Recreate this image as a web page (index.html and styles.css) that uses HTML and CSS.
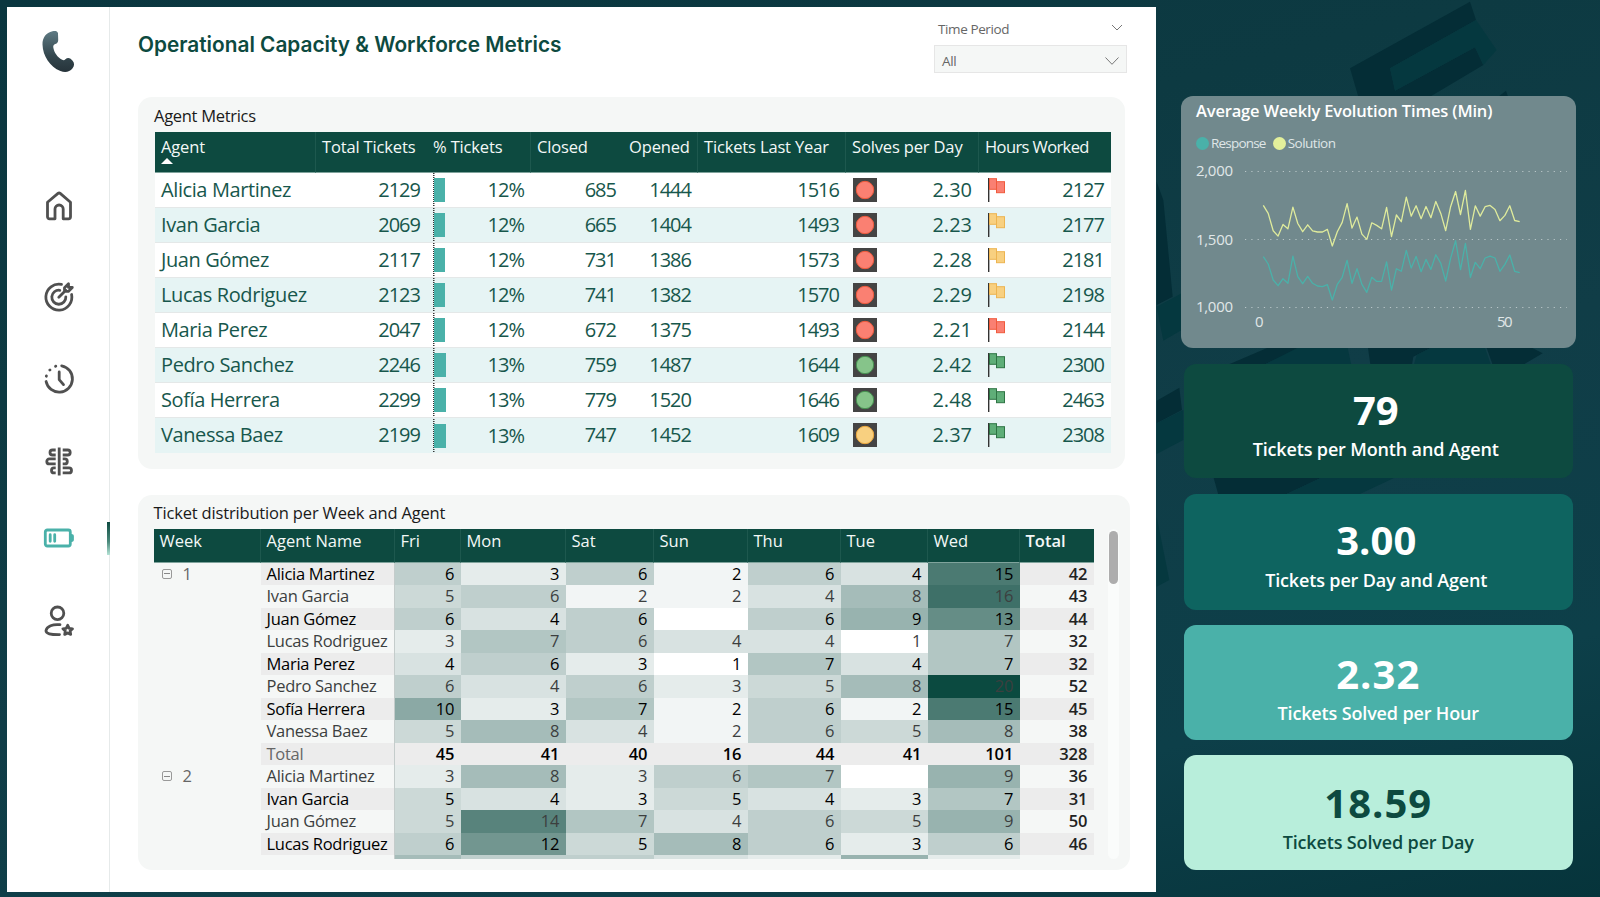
FILE: index.html
```html
<!DOCTYPE html>
<html lang="en">
<head>
  <meta charset="UTF-8">
  <meta name="viewport" content="width=device-width, initial-scale=1.0">
  <title>Operational Capacity &amp; Workforce Metrics</title>
  <link rel="stylesheet" href="styles.css">
</head>
<body>
  <!-- Decorative shapes behind the cards -->
  <svg class="backdrop" viewBox="0 0 1350 2691" preserveAspectRatio="none">
    <g fill="#042d36">
      <polygon points="600,205 960,5 978,60 720,205 735,272 975,142 1000,195 840,290 625,290"/>
      <polygon points="20,545 40,600 68,890 20,915"/>
      <polygon points="1045,290 1068,272 1074,290"/>
      <polygon points="220,1100 360,1040 480,1030 330,1100"/>
      <polygon points="652,1030 870,1030 790,1070 785,1100 662,1100"/>
      <polygon points="1005,1030 1120,1030 1178,1060 1110,1100 1030,1100"/>
      <polygon points="20,1202 88,1163 96,1230 20,1270"/>
      <polygon points="190,1430 520,1430 405,1484 205,1484"/>
    </g>
    <g fill="#05383f">
      <polygon points="720,205 978,60 1040,150 1000,195 975,142 735,272"/>
      <polygon points="20,920 95,880 95,990 40,1022"/>
      <polygon points="330,1100 470,1030 590,1030 605,1100"/>
      <polygon points="790,1100 800,1065 870,1030 1000,1030 1025,1100"/>
      <polygon points="20,1270 100,1230 100,1320 20,1362"/>
      <polygon points="20,1550 58,1740 20,1760"/>
      <polygon points="520,1430 740,1430 625,1484 405,1484"/>
    </g>
  </svg>

  <main class="panel">
    <nav class="sidebar">
      <svg class="logo" viewBox="0 0 34 44">
        <defs>
          <linearGradient id="phone" x1="0" y1="0" x2="0" y2="1">
            <stop offset="0" stop-color="#5f7b84"/>
            <stop offset="0.6" stop-color="#34474e"/>
            <stop offset="1" stop-color="#26333a"/>
          </linearGradient>
        </defs>
        <path fill="url(#phone)" d="M11.5 1.2C14 .6 16.500.8 17 3.200l.2 6.800c0 2.300-.9 3.300-2.900 4-1.500.6-2.300 1.500-2 3.400.8 5 4.200 9.900 8.800 12.300 1.500.8 2.300.6 3.300-.4 1.600-1.600 3.400-1.900 5.200-.5l2 2c2 2.200 2 5-.2 7.700-2.700 3.500-7.200 4.500-12 2.500C9 36.800 1.800 26 1.500 14.500 1.400 7.500 5 2.700 11.500 1.200z"/>
      </svg>

      <svg class="icon home" viewBox="0 0 32 32">
        <path d="M4.500 12.300 15 3.400a1.700 1.700 0 0 1 2.200 0l10.300 8.900v14.500a2 2 0 0 1-2 2h-5.300v-9.700a4.100 4.100 0 0 0-8.200 0v9.700H6.500a2 2 0 0 1-2-2z"/>
      </svg>
      <svg class="icon target" viewBox="0 0 32 32">
        <path d="M18.500 3.400A13 13 0 1 0 28.600 13.500M16.800 9.300a7 7 0 1 0 6 6.500M15.800 16.200l7-7M21.500 10.400V6.800l4-4v3.600h3.800l-4 4z"/>
      </svg>
      <svg class="icon clock" viewBox="0 0 32 32">
        <path d="M18.700 2.800A13.300 13.300 0 1 1 3.100 18.500M16.200 9v7.600l4.300 5"/>
        <path d="M3.300 13.200l.1-.3M6.800 7.100l.2-.2M12.500 3.300l.3-.1"/>
      </svg>
      <svg class="icon align" viewBox="0 0 32 32">
        <path d="M16.200 2.500v28M12.700 5H9.500a2.500 2.500 0 0 0 0 5H12.700M12.700 13.900H6.300a2.500 2.500 0 0 0 0 5H12.700M12.700 22.900h-1.700a2.500 2.500 0 0 0 0 5h1.700M19.700 5h5a2.500 2.500 0 0 1 0 5h-5M19.700 13.900h2.100a2.500 2.500 0 0 1 0 5h-2.100M19.700 22.900h6.300a2.500 2.500 0 0 1 0 5h-6.300"/>
      </svg>
      <div class="nav-active">
        <svg class="icon battery" viewBox="0 0 32 32">
          <rect x="2.300" y="8" width="25" height="16" rx="2"/>
          <path d="M7.200 12.700v6.600M11.700 12.700v6.600"/>
          <path class="tip" d="M27.500 12c3.400.2 3.400.8 3.400 4s0 3.800-3.400 4z"/>
        </svg>
        <span class="marker"></span>
      </div>
      <svg class="icon user" viewBox="0 0 32 32">
        <circle cx="14.500" cy="8.300" r="6.300"/>
        <path d="M17 19.700c-7-.8-13.500 1.500-14 6-.2 3 4.500 4 13.500 3.900"/>
        <path d="M24.700 20.300l1.500 3 3.300.5-2.400 2.300.6 3.300-3-1.500-3 1.500.6-3.300-2.400-2.300 3.300-.5z"/>
      </svg>
    </nav>

    <section class="content">
      <header class="top">
        <h1>Operational Capacity &amp; Workforce Metrics</h1>
        <div class="filter">
          <div class="filter-label">
            <span>Time Period</span>
            <svg viewBox="0 0 12 7" width="12" height="7"><path d="M1 1l5 5 5-5"/></svg>
          </div>
          <div class="filter-box">
            <span>All</span>
            <svg viewBox="0 0 14 8" width="14" height="8"><path d="M.5.5L7 7.300 13.500.5"/></svg>
          </div>
        </div>
      </header>

      <!-- Agent metrics -->
      <div class="card metrics-card">
        <h2>Agent Metrics</h2>
        <table class="metrics">
          <colgroup>
            <col class="m1"><col class="m2"><col class="m3"><col class="m4"><col class="m5"><col class="m6"><col class="m7"><col class="m8">
          </colgroup>
          <thead>
            <tr>
              <th class="line">Agent<i class="sort"></i></th>
              <th>Total Tickets</th>
              <th class="line">% Tickets</th>
              <th>Closed</th>
              <th class="line">Opened</th>
              <th class="line">Tickets Last Year</th>
              <th class="line">Solves per Day</th>
              <th class="hours">Hours Worked</th>
            </tr>
          </thead>
          <tbody id="metrics"></tbody>
        </table>
      </div>

      <!-- Heat map by week -->
      <div class="card weeks-card">
        <h2>Ticket distribution per Week and Agent</h2>
        <div class="weeks-wrap">
          <div class="weeks-view">
            <table class="weeks">
              <colgroup>
                <col class="w1"><col class="w2"><col class="w3"><col class="w4"><col class="w5"><col class="w6"><col class="w7"><col class="w8"><col class="w9"><col class="w10">
              </colgroup>
              <thead>
                <tr>
                  <th>Week</th><th>Agent Name</th><th>Fri</th><th>Mon</th><th>Sat</th><th>Sun</th><th>Thu</th><th>Tue</th><th>Wed</th><th class="bold">Total</th>
                </tr>
              </thead>
              <tbody id="weeks"></tbody>
            </table>
          </div>
          <div class="scroll"><div class="thumb"></div></div>
        </div>
      </div>
    </section>
  </main>

  <aside class="side">
    <div class="chart-card">
      <h2>Average Weekly Evolution Times (Min)</h2>
      <div class="legend">
        <span class="dot response"></span><span class="legend-text">Response</span>
        <span class="dot solution"></span><span class="legend-text">Solution</span>
      </div>
      <svg class="chart" viewBox="0 0 395 200">
        <g class="grid">
          <path d="M64 19.500H386"/><path d="M64 87.500H386"/><path d="M64 155.500H386"/>
        </g>
        <g class="axis">
          <text x="15" y="24" textLength="37">2,000</text>
          <text x="15" y="92.500" textLength="37">1,500</text>
          <text x="15" y="160" textLength="37">1,000</text>
          <text x="74" y="175">0</text>
          <text x="316" y="175" textLength="15.500">50</text>
        </g>
        <polyline id="response" class="series response-line"/>
        <polyline id="solution" class="series solution-line"/>
      </svg>
    </div>

    <div class="kpi month"><strong>79</strong><span>Tickets per Month and Agent</span></div>
    <div class="kpi day"><strong>3.00</strong><span>Tickets per Day and Agent</span></div>
    <div class="kpi hour"><strong>2.32</strong><span>Tickets Solved per Hour</span></div>
    <div class="kpi solved"><strong>18.59</strong><span>Tickets Solved per Day</span></div>
  </aside>

  <script>
    // name, total, %, closed, opened, last year, solves, light, hours, flag
    const agents = [
      ['Alicia Martinez', 2129, 12, 685, 1444, 1516, '2.30', 'red', 2127, 'red'],
      ['Ivan Garcia', 2069, 12, 665, 1404, 1493, '2.23', 'red', 2177, 'yellow'],
      ['Juan Gómez', 2117, 12, 731, 1386, 1573, '2.28', 'red', 2181, 'yellow'],
      ['Lucas Rodriguez', 2123, 12, 741, 1382, 1570, '2.29', 'red', 2198, 'yellow'],
      ['Maria Perez', 2047, 12, 672, 1375, 1493, '2.21', 'red', 2144, 'red'],
      ['Pedro Sanchez', 2246, 13, 759, 1487, 1644, '2.42', 'green', 2300, 'green'],
      ['Sofía Herrera', 2299, 13, 779, 1520, 1646, '2.48', 'green', 2463, 'green'],
      ['Vanessa Baez', 2199, 13, 747, 1452, 1609, '2.37', 'yellow', 2308, 'green']
    ];

    const flag = color => `<svg class="flag ${color}" viewBox="0 0 18 24"><path class="pole" d="M.7 0v24"/><rect x="1.500" y=".7" width="7" height="10.600"/><rect x="8.500" y="3.700" width="8" height="11"/></svg>`;
    const light = color => `<svg class="light ${color}" viewBox="0 0 24 24"><circle cx="12" cy="12" r="8.700"/></svg>`;

    document.getElementById('metrics').innerHTML = agents.map(a => `
      <tr>
        <td class="name">${a[0]}</td>
        <td>${a[1]}</td>
        <td><div class="cell bar-cell"><i class="bar" style="width:${a[2] - 1.5}px"></i><span>${a[2]}%</span></div></td>
        <td>${a[3]}</td>
        <td>${a[4]}</td>
        <td>${a[5]}</td>
        <td><div class="cell">${light(a[7])}<span class="decimal">${a[6]}</span></div></td>
        <td><div class="cell flag-cell">${flag(a[9])}<span>${a[8]}</span></div></td>
      </tr>`).join('');

    // week, name, Fri, Mon, Sat, Sun, Thu, Tue, Wed, total
    const weeks = [
      ['1', 'Alicia Martinez', 6, 3, 6, 2, 6, 4, 15, 42],
      ['', 'Ivan Garcia', 5, 6, 2, 2, 4, 8, 16, 43],
      ['', 'Juan Gómez', 6, 4, 6, '', 6, 9, 13, 44],
      ['', 'Lucas Rodriguez', 3, 7, 6, 4, 4, 1, 7, 32],
      ['', 'Maria Perez', 4, 6, 3, 1, 7, 4, 7, 32],
      ['', 'Pedro Sanchez', 6, 4, 6, 3, 5, 8, 20, 52],
      ['', 'Sofía Herrera', 10, 3, 7, 2, 6, 2, 15, 45],
      ['', 'Vanessa Baez', 5, 8, 4, 2, 6, 5, 8, 38],
      ['', 'Total', 45, 41, 40, 16, 44, 41, 101, 328],
      ['2', 'Alicia Martinez', 3, 8, 3, 6, 7, '', 9, 36],
      ['', 'Ivan Garcia', 5, 4, 3, 5, 4, 3, 7, 31],
      ['', 'Juan Gómez', 5, 14, 7, 4, 6, 5, 9, 50],
      ['', 'Lucas Rodriguez', 6, 12, 5, 8, 6, 3, 6, 46]
    ];

    // top edge of the row under the fold
    const nextRow = [8, 6, 6, 4, 3, 9, 3];

    // white at 1, dark green at 20
    function heat(n) {
      const t = n === '' ? 0 : (n - 1) / 19;
      const c = [11, 74, 64].map(v => Math.round(255 + (v - 255) * t));
      return `rgb(${c.join(',')})`;
    }

    document.getElementById('weeks').innerHTML = weeks.map((r, i) => {
      const total = r[1] === 'Total';
      const cells = r.slice(2, 9).map(n => total ? `<td>${n}</td>` : `<td style="background:${heat(n)}">${n}</td>`).join('');
      const week = r[0] ? `<i class="toggle"></i><span>${r[0]}</span>` : '';
      return `<tr class="${i % 2 ? 'odd' : 'even'}${total ? ' total' : ''}"><td class="week"><div>${week}</div></td><td class="name">${r[1]}</td>${cells}<td class="sum">${r[9]}</td></tr>`;
    }).join('') + `<tr><td></td><td class="name"></td>${nextRow.map(n => `<td style="background:${heat(n)}"></td>`).join('')}<td></td></tr>`;

    const solution = [1751, 1692, 1565, 1525, 1611, 1579, 1738, 1618, 1557, 1608, 1564, 1555, 1555, 1574, 1452, 1557, 1626, 1763, 1584, 1665, 1540, 1501, 1623, 1604, 1579, 1736, 1521, 1680, 1631, 1812, 1672, 1748, 1653, 1743, 1660, 1780, 1692, 1565, 1741, 1853, 1684, 1861, 1574, 1748, 1672, 1741, 1751, 1721, 1638, 1677, 1748, 1640, 1631];
    const response = [1374, 1320, 1202, 1160, 1212, 1178, 1378, 1227, 1175, 1229, 1178, 1158, 1153, 1168, 1055, 1170, 1222, 1347, 1178, 1285, 1170, 1111, 1222, 1192, 1192, 1335, 1128, 1285, 1266, 1420, 1290, 1376, 1263, 1354, 1280, 1388, 1324, 1195, 1361, 1491, 1278, 1471, 1222, 1332, 1285, 1364, 1378, 1364, 1266, 1317, 1386, 1266, 1256];

    function plot(id, values) {
      const points = values.map((v, i) => `${(82.3 + i * 4.93).toFixed(1)},${(155.5 - (v - 1000) * 0.136).toFixed(1)}`);
      document.getElementById(id).setAttribute('points', points.join(' '));
    }
    plot('solution', solution);
    plot('response', response);
  </script>
</body>
</html>
```
FILE: styles.css
```css
* {
  box-sizing: border-box;
  margin: 0;
  padding: 0;
}

body {
  width: 1600px;
  height: 897px;
  overflow: hidden;
  display: flex;
  padding: 7px 0 0 7px;
  font-family: "Trebuchet MS", "Open Sans", sans-serif;
  font-stretch: 88%;
  background: linear-gradient(165deg, #0a363f 0%, #0d3a42 30%, #103d47 55%, #0d3f49 80%, #06343b 100%);
}

.backdrop {
  position: absolute;
  left: 1150px;
  top: 0;
  width: 450px;
  height: 897px;
}

.panel {
  display: flex;
  width: 1149px;
  height: 885px;
  background: #fff;
}

/* Sidebar */
.sidebar {
  width: 103px;
  border-right: 1px solid #e6eaea;
  display: flex;
  flex-direction: column;
  align-items: center;
  padding-top: 23px;
}

.logo {
  width: 34px;
  height: 44px;
}

.icon {
  width: 32px;
  height: 32px;
  fill: none;
  stroke: #505050;
  stroke-width: 2.8;
  stroke-linecap: round;
  stroke-linejoin: round;
  margin-left: 2px;
}

.home {
  margin-top: 116px;
}

.target {
  margin-top: 59px;
}

.clock {
  margin-top: 50px;
}

.align {
  margin-top: 50px;
  stroke-linecap: butt;
}

.nav-active {
  width: 100%;
  height: 32px;
  margin-top: 45px;
  padding-left: 34px;
  display: flex;
  justify-content: space-between;
}

.battery {
  stroke: #4ab1a9;
}

.battery .tip {
  fill: #4ab1a9;
  stroke: none;
}

.marker {
  width: 3px;
  height: 33px;
  margin-right: -1px;
  background: linear-gradient(#0d4a40, #4c8a7c 60%, #b5e3d6);
}

.user {
  margin-top: 51px;
}

/* Content */
.content {
  padding-left: 28px;
}

.top {
  width: 989px;
  height: 90px;
  display: flex;
  justify-content: space-between;
}

h1 {
  padding-top: 24px;
  font-family: Inter, sans-serif;
  font-stretch: normal;
  font-size: 20.8px;
  line-height: 27px;
  font-weight: 600;
  color: #0d4a40;
}

.filter {
  width: 193px;
  padding-top: 13px;
  font-size: 13.5px;
  letter-spacing: -0.4px;
  color: #666;
}

.filter svg {
  fill: none;
  stroke: #777;
}

.filter-label {
  height: 25px;
  line-height: 18px;
  padding: 0 4px;
  display: flex;
  justify-content: space-between;
}

.filter-label svg {
  margin-top: 4px;
}

.filter-box {
  height: 28px;
  padding: 3px 7px 0 7px;
  display: flex;
  align-items: center;
  justify-content: space-between;
  background: #f5f7f6;
  border: 1px solid #e6e6e6;
}

.card {
  background: #f5f7f6;
  border-radius: 14px;
  padding-left: 17px;
}

.card h2 {
  font-size: 16.5px;
  font-weight: 400;
  color: #1a1a1a;
}

.metrics-card {
  width: 987px;
  height: 372px;
}

.metrics-card h2 {
  height: 35px;
  line-height: 38px;
  margin-left: -1px;
  letter-spacing: -0.3px;
}

table {
  table-layout: fixed;
  border-collapse: separate;
  border-spacing: 0;
}

th {
  background: #0d4a40;
  color: #f3f8f7;
  font-weight: 400;
  font-size: 16.5px;
  text-align: left;
  vertical-align: top;
}

.metrics {
  width: 956px;
}

.m1 { width: 161px; }
.m2 { width: 111px; }
.m3 { width: 104px; }
.m4 { width: 92px; }
.m5 { width: 75px; }
.m6 { width: 148px; }
.m7 { width: 133px; }
.m8 { width: 132px; }

.metrics th {
  height: 41px;
  padding: 4px 0 0 6px;
  line-height: 22px;
  letter-spacing: -0.15px;
  white-space: nowrap;
  border-bottom: 1px solid #7fa39c;
}

.metrics th.line {
  border-right: 1px solid #1d584e;
}

.metrics th.hours {
  letter-spacing: -0.6px;
}

.sort {
  display: block;
  width: 0;
  border: 6px solid transparent;
  border-top: 0;
  border-bottom: 6px solid #fff;
}

.metrics td {
  height: 35px;
  padding: 0 7px 1px 0;
  font-size: 20px;
  line-height: 30px;
  letter-spacing: -1px;
  text-align: right;
  white-space: nowrap;
  color: #17574c;
  background: #fff;
  border-bottom: 1px solid #e4e8e8;
}

.metrics tr:nth-child(even) td {
  background: #e6f4f4;
}

.metrics tr:last-child td {
  border-bottom: 0;
}

.metrics td.name {
  text-align: left;
  letter-spacing: -0.4px;
  padding-left: 6px;
}

.cell {
  display: flex;
  align-items: center;
  justify-content: space-between;
  padding-left: 7px;
}

.decimal {
  letter-spacing: 0;
}

.bar-cell {
  height: 34px;
  margin-bottom: -1px;
  background: repeating-linear-gradient(#333 0 1px, transparent 1px 2px) 6px 0 / 1.5px 100% no-repeat;
}

.bar {
  height: 24px;
  background: #4ab1a9;
}

.light {
  width: 24px;
  height: 24px;
  background: #444;
}

.light.red {
  fill: #fa8072;
  stroke: #f05a3c;
}

.light.yellow {
  fill: #f8d080;
  stroke: #eda93c;
}

.light.green {
  fill: #86c48a;
  stroke: #45914f;
}

.flag-cell {
  padding-left: 9px;
}

.flag {
  width: 18px;
  height: 24px;
}

.flag .pole {
  stroke: #333;
  stroke-width: 1.4;
}

.flag.red rect {
  fill: #fa8072;
  stroke: #f05a3c;
}

.flag.yellow rect {
  fill: #f8d080;
  stroke: #edb450;
}

.flag.green rect {
  fill: #5fae78;
  stroke: #2f7444;
}

/* Weeks table */
.weeks-card {
  width: 992px;
  height: 375px;
  margin-top: 26px;
  padding-left: 15.5px;
}

.weeks-card h2 {
  height: 33.5px;
  line-height: 36px;
  letter-spacing: -0.17px;
}

.weeks-wrap {
  display: flex;
}

.weeks-view {
  width: 940px;
  height: 330px;
  overflow: hidden;
}

.weeks {
  width: 940px;
}

.w1 { width: 107px; }
.w2 { width: 134px; }
.w3 { width: 66px; }
.w4 { width: 105px; }
.w5 { width: 88px; }
.w6 { width: 94px; }
.w7 { width: 93px; }
.w8 { width: 87px; }
.w9 { width: 92px; }
.w10 { width: 74px; }

.weeks th {
  height: 34px;
  padding: 1px 0 0 6px;
  line-height: 22px;
  border-right: 1px solid #1d584e;
  border-bottom: 1px solid #7fa39c;
}

.weeks th.bold {
  font-weight: 600;
  border-right: 0;
}

.weeks td {
  height: 22.5px;
  padding: 0 6px 0 0;
  font-size: 16.5px;
  line-height: 22.5px;
  text-align: right;
  white-space: nowrap;
  color: #3c3f3f;
}

.weeks .name {
  text-align: left;
  padding: 0 0 0 6px;
  letter-spacing: -0.28px;
  border-right: 1px solid #c4cccb;
}

.weeks .even td {
  color: #000;
}

.weeks .even .name,
.weeks .even .sum,
.weeks .total td {
  background: #ececec;
}

.weeks td.week {
  background: none;
  color: #666;
}

.week div {
  display: flex;
  align-items: center;
  gap: 11px;
  padding-left: 8px;
  height: 22px;
}

.toggle {
  width: 10px;
  height: 10px;
  border: 1px solid #999;
  border-radius: 2px;
  padding: 3.5px 1px;
}

.toggle::before {
  content: "";
  display: block;
  height: 1px;
  background: #888;
}

.weeks td.sum {
  font-weight: 600;
  color: #222;
}

.weeks .total td {
  font-weight: 600;
}

.weeks .total .name {
  color: #666;
  font-weight: 500;
}

.weeks .total .week {
  background: none;
}

.scroll {
  width: 11px;
  height: 330px;
  margin-left: 14.5px;
  padding: 2px 1px;
  background: #fafcfb;
  border-radius: 6px;
}

.thumb {
  height: 53px;
  border-radius: 5px;
  background: #adadad;
}

/* Right column */
.side {
  position: relative;
  padding: 89px 0 0 25px;
}

.chart-card {
  width: 395px;
  height: 252px;
  border-radius: 12px;
  background: #71898d;
}

.chart-card h2 {
  padding-left: 15px;
  height: 37px;
  line-height: 30px;
  font-size: 16.5px;
  font-weight: 650;
  letter-spacing: -0.16px;
  color: #fff;
}

.legend {
  display: flex;
  align-items: center;
  height: 20px;
  padding-left: 15px;
  font-size: 13.5px;
  letter-spacing: -0.8px;
  color: #dfe6e7;
}

.dot {
  width: 13px;
  height: 13px;
  border-radius: 50%;
  margin-right: 2px;
}

.response {
  background: #4ab1a9;
}

.solution {
  background: #e3f09b;
  margin-left: 7px;
}

.solution + .legend-text {
  letter-spacing: -0.5px;
}

.chart {
  display: block;
  width: 395px;
  height: 200px;
  margin-top: -1px;
}

.grid path {
  stroke: #b9c6c8;
  stroke-width: 1;
  stroke-dasharray: 1.2 5.1;
}

.axis {
  font-size: 15px;
  fill: #e0e7e8;
}

.series {
  fill: none;
  stroke-width: 1.3;
  stroke-linejoin: round;
}

.response-line {
  stroke: #4ab1a9;
}

.solution-line {
  stroke: #dfeb9c;
}

.kpi {
  width: 389.5px;
  height: 115px;
  margin: 15px 0 0 2.5px;
  border-radius: 12px;
  display: flex;
  flex-direction: column;
  align-items: center;
  color: #fff;
}

.kpi strong {
  margin-top: 23px;
  font-size: 40px;
  line-height: 45px;
  font-weight: 660;
}

.kpi span {
  font-size: 18px;
  line-height: 34px;
  font-weight: 640;
  letter-spacing: -0.15px;
}

.month {
  height: 114px;
  margin-top: 16px;
  padding-right: 5px;
  background: #0d4a40;
}

.day {
  height: 116px;
  margin-top: 16px;
  padding-right: 4px;
  background: #0e6460;
}

.day span {
  line-height: 37px;
}

.hour {
  padding-top: 3px;
  background: #4ab1a9;
}

.hour strong {
  letter-spacing: 1px;
}

.solved {
  padding-top: 2px;
  background: #b8eedb;
  color: #0d4a40;
}

.solved strong {
  letter-spacing: 1px;
}
```
